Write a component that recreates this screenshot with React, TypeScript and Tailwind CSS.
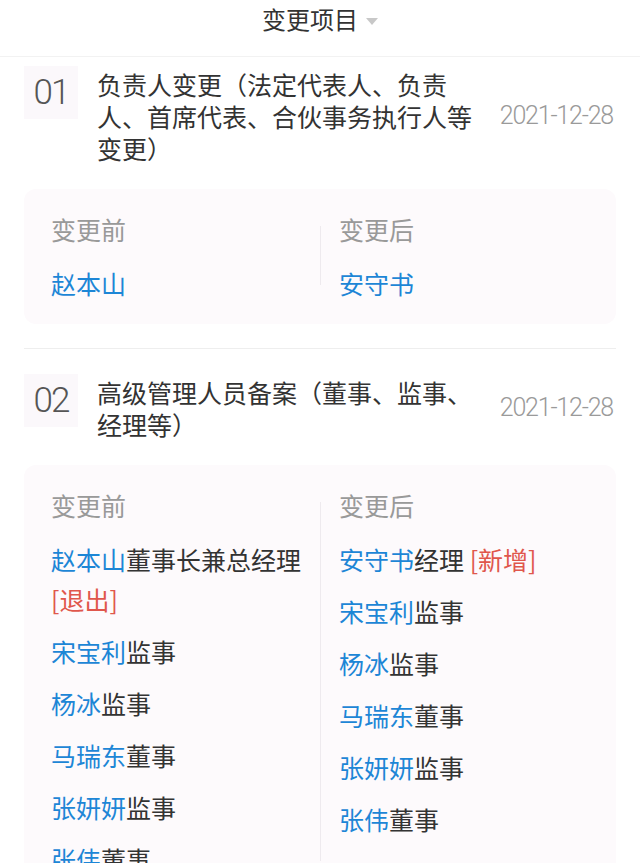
import React from "react"

type Entry = { name: string; role?: string; tag?: string }

type Change = {
    no: string
    title: string
    date: string
    before: Entry[]
    after: Entry[]
}

const CHANGES: Change[] = [
    {
        no: "01",
        title: "负责人变更（法定代表人、负责人、首席代表、合伙事务执行人等变更）",
        date: "2021-12-28",
        before: [{ name: "赵本山" }],
        after: [{ name: "安守书" }],
    },
    {
        no: "02",
        title: "高级管理人员备案（董事、监事、经理等）",
        date: "2021-12-28",
        before: [
            { name: "赵本山", role: "董事长兼总经理", tag: "[退出]" },
            { name: "宋宝利", role: "监事" },
            { name: "杨冰", role: "监事" },
            { name: "马瑞东", role: "董事" },
            { name: "张妍妍", role: "监事" },
            { name: "张伟", role: "董事" },
        ],
        after: [
            { name: "安守书", role: "经理", tag: "[新增]" },
            { name: "宋宝利", role: "监事" },
            { name: "杨冰", role: "监事" },
            { name: "马瑞东", role: "董事" },
            { name: "张妍妍", role: "监事" },
            { name: "张伟", role: "董事" },
        ],
    },
]

function EntryList({ label, items }: { label: string; items: Entry[] }) {
    return (
        <div className="flex flex-col gap-[12px]">
            <p className="text-[#999] leading-[40px] mb-[2px]">{label}</p>
            {items.map((it, i) => (
                <p key={i} className="leading-[40px]">
                    <span className="text-[#1d86d6]">{it.name}</span>
                    {it.role && <span className="text-[#333]">{it.role}</span>}
                    {it.tag && <span className="text-[#e0574c]"> {it.tag}</span>}
                </p>
            ))}
        </div>
    )
}

export default function App() {
    return (
        <div
            className="min-h-screen bg-white text-[25px] text-[#333]"
            style={{ fontFamily: '"Noto Sans CJK SC", "Noto Sans", sans-serif' }}
        >
            {/* HEADER */}
            <div className="h-[57px] flex items-start justify-center gap-2 pt-[5px] border-b border-[#f2f2f2]">
                <span className="text-[24px] text-[#333] leading-[28px]">变更项目</span>
                <span className="w-0 h-0 border-l-[6px] border-r-[6px] border-t-[7px] border-l-transparent border-r-transparent border-t-[#c8c8c8] mt-[13px]" />
            </div>

            {/* LIST */}
            <div className="px-6">
                {CHANGES.map((c, idx) => (
                    <div
                        key={c.no}
                        className={idx === 0 ? "pt-[11px] pb-[24px] border-b border-[#eeeeee]" : "pt-[27px]"}
                    >
                        <div className="flex items-start">
                            <div className="w-[54px] h-[53px] mt-[-2px] bg-[#fbf8fb] shrink-0 flex items-center justify-center">
                                <span
                                    className="text-[35px] font-light text-[#555] tracking-[-2px] leading-none"
                                    style={{ fontFamily: "Roboto, sans-serif" }}
                                >
                                    {c.no}
                                </span>
                            </div>
                            <p className="ml-[19px] w-[385px] leading-[32px] text-[#333]">{c.title}</p>
                            <p
                                className="self-center ml-auto mr-[3px] text-[25px] font-light text-[#9a9a9a] tracking-[-1.2px]"
                                style={{ fontFamily: "Roboto, sans-serif" }}
                            >
                                {c.date}
                            </p>
                        </div>

                        <div className="mt-[25px] bg-[#fdfafc] rounded-xl pt-[20px] pb-[21px] flex">
                            <div className="w-[296px] pl-[27px] pr-3">
                                <EntryList label="变更前" items={c.before} />
                            </div>
                            <div className="flex-1 mt-[17px] mb-[18px] border-l border-[#eeeaee]">
                                <div className="-mt-[17px] -mb-[18px] pl-[18px]">
                                    <EntryList label="变更后" items={c.after} />
                                </div>
                            </div>
                        </div>
                    </div>
                ))}
            </div>
        </div>
    )
}
